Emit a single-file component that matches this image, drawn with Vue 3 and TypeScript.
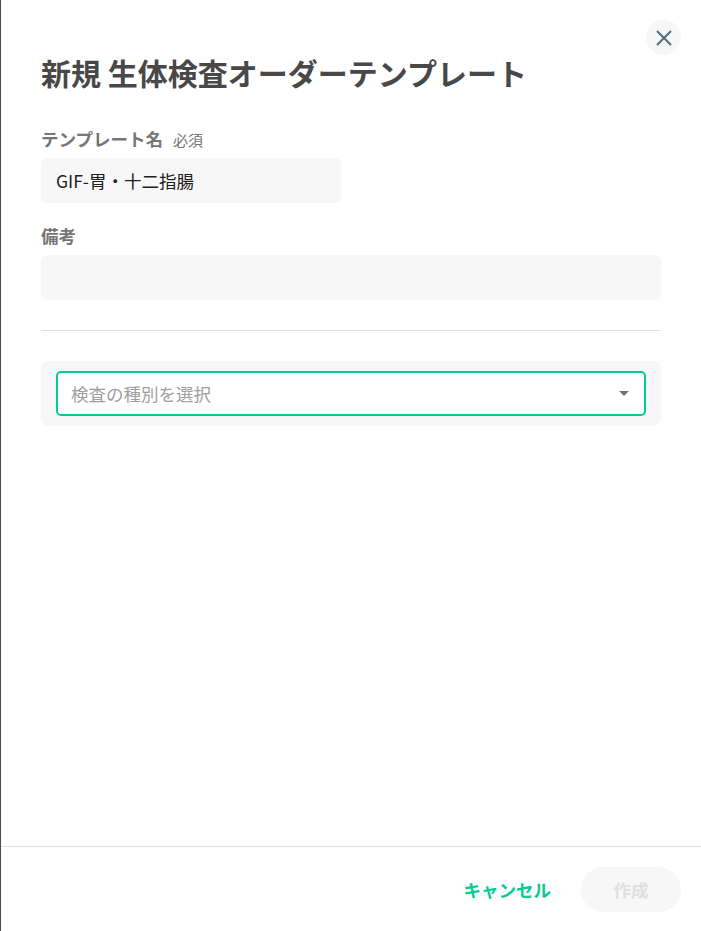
<script setup lang="ts">
const title = "新規 生体検査オーダーテンプレート";
</script>

<template>
  <div class="drawer">
    <div class="body">
      <button class="close" type="button" aria-label="閉じる">
        <svg width="16" height="16" viewBox="0 0 16 16">
          <path d="M1 1 L15 15 M15 1 L1 15" stroke="#546e7a" stroke-width="2" fill="none" />
        </svg>
      </button>
      <h1>{{ title }}</h1>

      <div class="field name-field">
        <div class="label">テンプレート名<span class="req">必須</span></div>
        <div class="input short">GIF-胃・十二指腸</div>
      </div>

      <div class="field memo-field">
        <div class="label">備考</div>
        <div class="input"></div>
      </div>

      <hr />

      <div class="panel">
        <div class="select">
          <span>検査の種別を選択</span>
          <i class="caret"></i>
        </div>
      </div>
    </div>

    <div class="footer">
      <button class="cancel" type="button">キャンセル</button>
      <button class="create" type="button">作成</button>
    </div>
  </div>
</template>

<style>
html,
body {
  margin: 0;
  background: #fff;
}
</style>

<style scoped>
.drawer {
  display: flex;
  flex-direction: column;
  box-sizing: border-box;
  width: 701px;
  height: 931px;
  border-left: 1px solid #4a4a4a;
  background: #fff;
  font-family: "Noto Sans CJK JP", "Noto Sans", sans-serif;
  color: #212121;
}

.body {
  position: relative;
  flex: 1;
  padding: 48px 40px 0;
}

.close {
  position: absolute;
  top: 20px;
  right: 20px;
  display: flex;
  align-items: center;
  justify-content: center;
  width: 35px;
  height: 35px;
  padding: 0;
  border: 0;
  border-radius: 50%;
  background: #f7f7f7;
}

h1 {
  margin: 0;
  font-size: 30px;
  line-height: 48px;
  font-weight: 700;
  color: #484848;
}

.field {
  display: flex;
  flex-direction: column;
}

.name-field {
  margin-top: 31px;
}

.memo-field {
  margin-top: 21px;
}

.label {
  height: 24px;
  margin-bottom: 7px;
  font-size: 17.5px;
  line-height: 24px;
  font-weight: 700;
  color: #757575;
}

.req {
  margin-left: 10px;
  font-size: 15px;
  font-weight: 400;
}

.input {
  box-sizing: border-box;
  height: 45px;
  padding: 0 15px;
  border-radius: 6px;
  background: #f7f7f7;
  font-size: 17.5px;
  line-height: 45px;
}

.short {
  width: 300px;
}

hr {
  height: 1px;
  margin: 30px 0;
  border: 0;
  background: #e0e0e0;
}

.panel {
  padding: 10px 15px;
  border-radius: 8px;
  background: #f7f7f7;
}

.select {
  display: flex;
  align-items: center;
  justify-content: space-between;
  box-sizing: border-box;
  height: 45px;
  padding: 0 15px;
  border: 2px solid #00cc96;
  border-radius: 5px;
  background: #fff;
  font-size: 17.5px;
  color: #9e9e9e;
}

.select span {
  margin-left: -2px;
}

.caret {
  width: 0;
  height: 0;
  border-top: 5px solid #757575;
  border-left: 5.5px solid transparent;
  border-right: 5.5px solid transparent;
}

.footer {
  display: flex;
  align-items: center;
  justify-content: flex-end;
  gap: 30px;
  box-sizing: border-box;
  height: 85px;
  padding: 0 20px;
  border-top: 1px solid #e0e0e0;
}

.footer button {
  border: 0;
  padding: 0;
  background: none;
  font-family: inherit;
  font-size: 17.5px;
  font-weight: 700;
}

.cancel {
  color: #00cc96;
}

.footer .create {
  width: 100px;
  height: 45px;
  border-radius: 23px;
  background: #f7f7f7;
  color: #e0e0e0;
}
</style>
